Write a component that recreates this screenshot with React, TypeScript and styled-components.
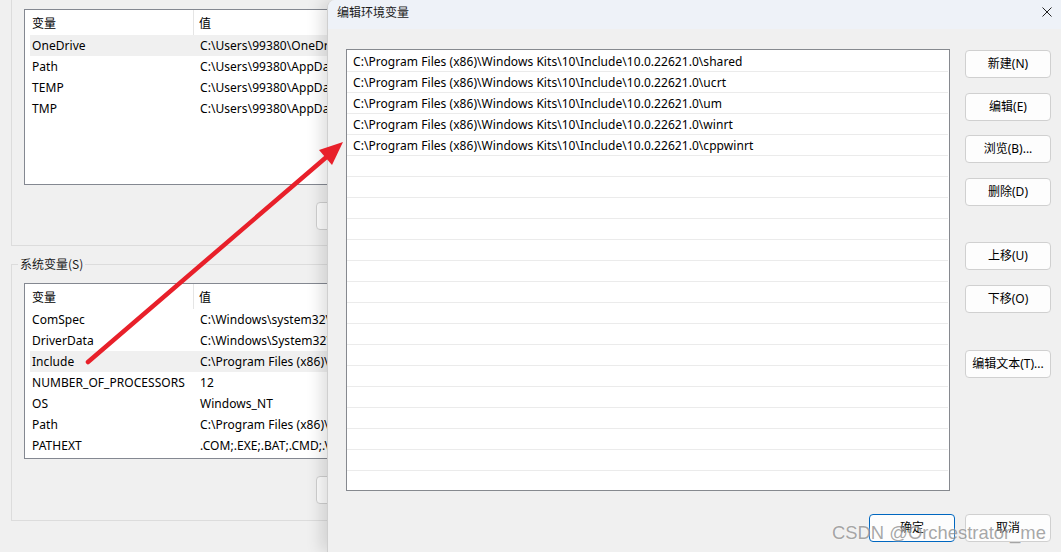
import React from "react";
import styled, { createGlobalStyle } from "styled-components";

const Global = createGlobalStyle`
  html, body { margin: 0; padding: 0; background: #f0f0f0; }
  * { box-sizing: border-box; }
  body { font-family: "Noto Sans", "Noto Sans CJK SC", sans-serif; font-size: 12px; color: #000; }
`;

const Screen = styled.div`
  position: relative;
  width: 1061px;
  height: 552px;
  overflow: hidden;
  background: #f0f0f0;
`;

const BackWindow = styled.div`
  display: flex;
  flex-direction: column;
  width: 460px;
  padding-left: 11px;
`;

const UserGroup = styled.section`
  display: flex;
  flex-direction: column;
  height: 246px;
  border: 1px solid #dcdcdc;
  border-top: none;
  padding: 9px 12px 0;
`;

const SystemGroup = styled.fieldset`
  display: flex;
  flex-direction: column;
  min-width: 0;
  margin: 10px 0 0;
  border: 1px solid #dcdcdc;
  padding: 11px 12px 16px;
`;

const GroupLabel = styled.legend`
  font-family: "Noto Sans CJK SC", sans-serif;
  font-size: 12px;
  line-height: 16px;
  padding: 0 2px;
  margin-left: -6px;
  color: #1a1a1a;
`;

const Table = styled.div`
  width: 420px;
  height: 176px;
  border: 1px solid #848891;
  background: #fff;
  display: flex;
  flex-direction: column;
`;

const HeaderRow = styled.div`
  display: flex;
  height: 25px;
  align-items: stretch;
  margin-left: 5px;
`;

const HeaderCell = styled.div<{ $first?: boolean }>`
  display: flex;
  align-items: center;
  font-family: "Noto Sans CJK SC", sans-serif;
  padding-left: ${(p) => (p.$first ? "2px" : "5px")};
  width: ${(p) => (p.$first ? "164px" : "auto")};
  border-right: ${(p) => (p.$first ? "1px solid #e5e5e5" : "none")};
`;

const VarRow = styled.div<{ $selected?: boolean }>`
  display: grid;
  grid-template-columns: 168px 1fr;
  height: 21px;
  align-items: center;
  margin-left: 5px;
  background: ${(p) => (p.$selected ? "#f0f0f0" : "transparent")};
  white-space: nowrap;
  letter-spacing: 0.05px;
`;

const Cell = styled.span`
  padding-left: 2px;
  overflow: hidden;
`;

const ButtonRow = styled.div`
  display: flex;
  gap: 10px;
  margin-top: 17px;
  padding-left: 292px;
`;

const WinButton = styled.button<{ $primary?: boolean }>`
  width: 86px;
  height: 28px;
  flex: none;
  border: 1px solid ${(p) => (p.$primary ? "#0067c0" : "#d0d0d0")};
  border-radius: 4px;
  background: #fdfdfd;
  font-family: "Noto Sans", "Noto Sans CJK SC", sans-serif;
  font-size: 12px;
  color: #000;
  padding: 0 0 2px;
  white-space: nowrap;
`;

const Dialog = styled.div`
  position: absolute;
  top: 0;
  left: 327px;
  width: 734px;
  height: 552px;
  background: #f0f0f0;
  border-left: 1px solid #cfcfcf;
  border-top-left-radius: 8px;
  box-shadow: -6px 0 16px rgba(0, 0, 0, 0.13);
  display: flex;
  flex-direction: column;
  overflow: hidden;
`;

const TitleBar = styled.div`
  height: 29px;
  flex: none;
  background: #eef2f8;
  display: flex;
  justify-content: space-between;
  align-items: flex-start;
  padding: 4px 9px 0 9px;
`;

const Title = styled.span`
  font-family: "Noto Sans CJK SC", sans-serif;
  font-size: 12px;
  line-height: 16px;
  color: #1a1a1a;
`;

const CloseIcon = styled.svg`
  margin-top: 3px;
`;

const Body = styled.div`
  display: flex;
  flex-direction: column;
  padding: 20px 10px 0 18px;
`;

const Main = styled.div`
  display: flex;
  gap: 15px;
  align-items: flex-start;
`;

const PathList = styled.div`
  width: 604px;
  height: 442px;
  border: 1px solid #86898f;
  background: #fff;
  padding-top: 1px;
  display: flex;
  flex-direction: column;
`;

const PathRow = styled.div`
  height: 21px;
  flex: none;
  margin-right: 1px;
  border-bottom: 1px solid #ebebeb;
  padding-left: 6px;
  line-height: 22px;
  letter-spacing: 0.05px;
  white-space: nowrap;
  overflow: hidden;
`;

const SideButtons = styled.div`
  display: flex;
  flex-direction: column;
  gap: 14.6px;
  padding-top: 1px;
`;

const SideButton = styled(WinButton)<{ $spaced?: boolean }>`
  margin-top: ${(p) => (p.$spaced ? "22px" : "0")};
`;

const Footer = styled.div`
  display: flex;
  justify-content: flex-end;
  gap: 10px;
  margin-top: 23px;
`;

const Overlay = styled.svg`
  position: absolute;
  left: 0;
  top: 0;
  pointer-events: none;
`;

const Watermark = styled.div`
  position: absolute;
  left: 832px;
  top: 522px;
  font-family: "Liberation Sans", Arial, sans-serif;
  font-size: 18.4px;
  line-height: 22px;
  color: rgba(110, 110, 110, 0.62);
  text-shadow: 0 0 2px rgba(255, 255, 255, 0.8);
  white-space: nowrap;
  pointer-events: none;
`;

const userVars = [
  ["OneDrive", "C:\\Users\\99380\\OneDrive"],
  ["Path", "C:\\Users\\99380\\AppData\\Local"],
  ["TEMP", "C:\\Users\\99380\\AppData\\Local\\Temp"],
  ["TMP", "C:\\Users\\99380\\AppData\\Local\\Temp"],
];

const sysVars = [
  ["ComSpec", "C:\\Windows\\system32\\cmd.exe"],
  ["DriverData", "C:\\Windows\\System32\\Drivers\\DriverData"],
  ["Include", "C:\\Program Files (x86)\\Windows Kits"],
  ["NUMBER_OF_PROCESSORS", "12"],
  ["OS", "Windows_NT"],
  ["Path", "C:\\Program Files (x86)\\Common Files"],
  ["PATHEXT", ".COM;.EXE;.BAT;.CMD;.VBS"],
];

const base = "C:\\Program Files (x86)\\Windows Kits\\10\\Include\\10.0.22621.0\\";
const paths = ["shared", "ucrt", "um", "winrt", "cppwinrt"].map((s) => base + s);
const rows = [...paths, ...Array(15).fill("")];

function VarTable({ data, selected }: { data: string[][]; selected: string }) {
  return (
    <Table>
      <HeaderRow>
        <HeaderCell $first>变量</HeaderCell>
        <HeaderCell>值</HeaderCell>
      </HeaderRow>
      {data.map(([k, v]) => (
        <VarRow key={k} $selected={k === selected}>
          <Cell>{k}</Cell>
          <Cell>{v}</Cell>
        </VarRow>
      ))}
    </Table>
  );
}

export default function App() {
  return (
    <Screen>
      <Global />
      <BackWindow>
        <UserGroup>
          <VarTable data={userVars} selected="OneDrive" />
          <ButtonRow>
            <WinButton>新建(N)...</WinButton>
            <WinButton>编辑(E)...</WinButton>
          </ButtonRow>
        </UserGroup>
        <SystemGroup>
          <GroupLabel>系统变量(S)</GroupLabel>
          <VarTable data={sysVars} selected="Include" />
          <ButtonRow>
            <WinButton>新建(W)...</WinButton>
            <WinButton>编辑(I)...</WinButton>
          </ButtonRow>
        </SystemGroup>
      </BackWindow>

      <Dialog>
        <TitleBar>
          <Title>编辑环境变量</Title>
          <CloseIcon width="10" height="10" viewBox="0 0 10 10">
            <path d="M0.5 0.5 L9.5 9.5 M9.5 0.5 L0.5 9.5" stroke="#222" strokeWidth="1" fill="none" />
          </CloseIcon>
        </TitleBar>
        <Body>
          <Main>
            <PathList>
              {rows.map((p, i) => (
                <PathRow key={i}>{p}</PathRow>
              ))}
            </PathList>
            <SideButtons>
              <SideButton>新建(N)</SideButton>
              <SideButton>编辑(E)</SideButton>
              <SideButton>浏览(B)...</SideButton>
              <SideButton>删除(D)</SideButton>
              <SideButton $spaced>上移(U)</SideButton>
              <SideButton>下移(O)</SideButton>
              <SideButton $spaced>编辑文本(T)...</SideButton>
            </SideButtons>
          </Main>
          <Footer>
            <WinButton $primary>确定</WinButton>
            <WinButton>取消</WinButton>
          </Footer>
        </Body>
      </Dialog>

      <Overlay width="1061" height="552" viewBox="0 0 1061 552">
        <line x1="88" y1="362" x2="330" y2="154" stroke="#e8202a" strokeWidth="4.5" strokeLinecap="round" />
        <polygon points="343,142 332,165 319,150" fill="#e8202a" />
      </Overlay>
      <Watermark>CSDN @Orchestrator_me</Watermark>
    </Screen>
  );
}
